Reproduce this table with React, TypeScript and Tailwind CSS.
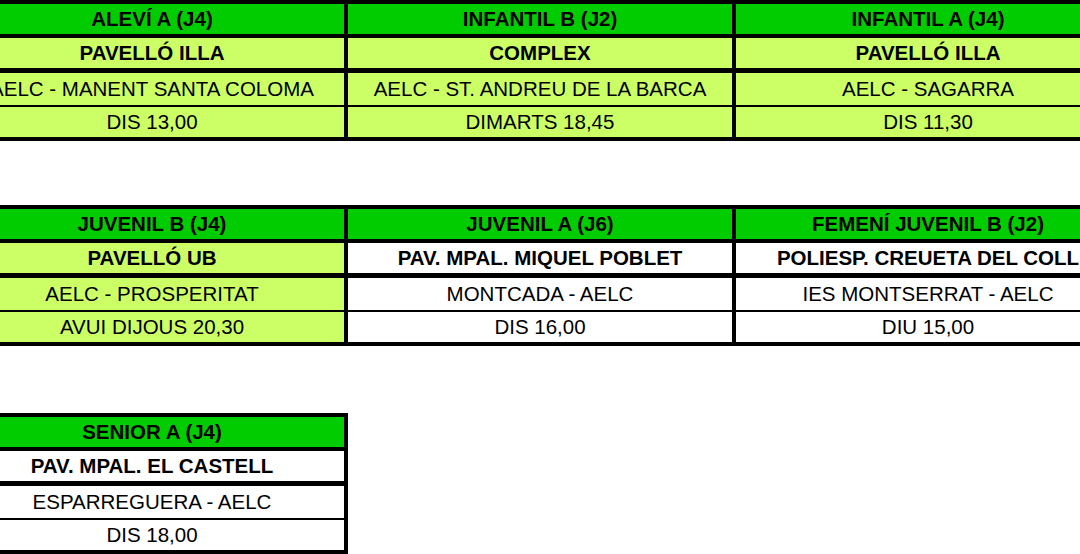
import React from "react";

type Cell = { text: string; bg: "light" | "white" };
type Col = { header: string; venue: Cell; match: Cell; time: Cell };

const LIGHT = "bg-[#ccff66]";
const WHITE = "bg-white";

function Column({ col }: { col: Col }) {
  const base =
    "flex items-center justify-center whitespace-nowrap text-[20.5px] leading-none text-black";
  return (
    <div className="flex w-[384px] flex-col">
      <div className={`${base} h-[30px] bg-[#00cc00] font-bold text-[#111]`}>
        {col.header}
      </div>
      <div
        className={`${base} mt-[4px] h-[30px] font-bold ${col.venue.bg === "light" ? LIGHT : WHITE}`}
      >
        {col.venue.text}
      </div>
      <div
        className={`${base} mt-[5px] h-[32px] ${col.match.bg === "light" ? LIGHT : WHITE}`}
      >
        {col.match.text}
      </div>
      <div
        className={`${base} mt-[2px] h-[30px] ${col.time.bg === "light" ? LIGHT : WHITE}`}
      >
        {col.time.text}
      </div>
    </div>
  );
}

function Block({ cols, className = "" }: { cols: Col[]; className?: string }) {
  return (
    <div className={`flex w-fit gap-[4px] bg-black p-[4px] ${className}`}>
      {cols.map((c, i) => (
        <Column key={i} col={c} />
      ))}
    </div>
  );
}

const L = (text: string): Cell => ({ text, bg: "light" });
const W = (text: string): Cell => ({ text, bg: "white" });

const block1: Col[] = [
  {
    header: "ALEVÍ A (J4)",
    venue: L("PAVELLÓ ILLA"),
    match: L("AELC - MANENT SANTA COLOMA"),
    time: L("DIS 13,00"),
  },
  {
    header: "INFANTIL B (J2)",
    venue: L("COMPLEX"),
    match: L("AELC - ST. ANDREU DE LA BARCA"),
    time: L("DIMARTS 18,45"),
  },
  {
    header: "INFANTIL A (J4)",
    venue: L("PAVELLÓ ILLA"),
    match: L("AELC - SAGARRA"),
    time: L("DIS 11,30"),
  },
];

const block2: Col[] = [
  {
    header: "JUVENIL B (J4)",
    venue: L("PAVELLÓ UB"),
    match: L("AELC - PROSPERITAT"),
    time: L("AVUI DIJOUS 20,30"),
  },
  {
    header: "JUVENIL A (J6)",
    venue: W("PAV. MPAL. MIQUEL POBLET"),
    match: W("MONTCADA - AELC"),
    time: W("DIS 16,00"),
  },
  {
    header: "FEMENÍ JUVENIL B (J2)",
    venue: W("POLIESP. CREUETA DEL COLL"),
    match: W("IES MONTSERRAT - AELC"),
    time: W("DIU 15,00"),
  },
];

const block3: Col[] = [
  {
    header: "SENIOR A (J4)",
    venue: W("PAV. MPAL. EL CASTELL"),
    match: W("ESPARREGUERA - AELC"),
    time: W("DIS 18,00"),
  },
];

export default function App() {
  return (
    <div
      className="relative h-[554px] w-[1080px] overflow-hidden bg-white"
      style={{ fontFamily: '"Liberation Sans", Arial, sans-serif' }}
    >
      <div className="ml-[-44px] flex flex-col">
        <Block cols={block1} />
        <Block cols={block2} className="mt-[64px]" />
        <Block cols={block3} className="mt-[67px]" />
      </div>
    </div>
  );
}
